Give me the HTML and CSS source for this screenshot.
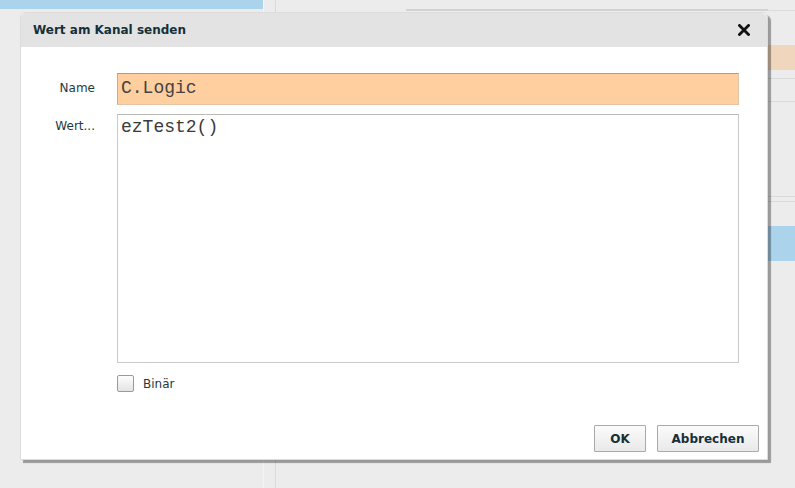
FILE: index.html
```html
<!DOCTYPE html>
<html lang="de">
<head>
<meta charset="utf-8">
<title>Wert am Kanal senden</title>
<link rel="stylesheet" href="styles.css">
</head>
<body>
<div class="app">
  <div class="col-left"><div class="blue-bar"></div></div>
  <div class="col-gap"></div>
  <div class="col-main"><div class="main-top"></div></div>
  <div class="col-right">
    <div class="r-top"></div>
    <div class="r-peach"></div>
    <div class="r-line r-l1"></div>
    <div class="r-line r-l2"></div>
    <div class="r-line r-l3"></div>
    <div class="r-line r-l4"></div>
    <div class="r-blue"></div>
  </div>
</div>

<div class="dialog">
  <div class="dlg-head">
    <span class="dlg-title">Wert am Kanal senden</span>
    <svg class="dlg-close" width="12" height="12" viewBox="0 0 12 12"><path d="M1.5 1.5 L10.5 10.5 M10.5 1.5 L1.5 10.5" stroke="#111" stroke-width="2.8" stroke-linecap="square"/></svg>
  </div>
  <div class="dlg-body">
    <div class="form">
      <label class="lbl lbl-name">Name</label>
      <div class="inp-name">C.Logic</div>
      <label class="lbl lbl-wert">Wert...</label>
      <div class="inp-wert">ezTest2()</div>
      <div></div>
      <div class="chk-row"><span class="chk"></span><span class="chk-lbl">Binär</span></div>
    </div>
    <div class="buttons">
      <button class="btn btn-ok">OK</button>
      <button class="btn btn-cancel">Abbrechen</button>
    </div>
  </div>
</div>
</body>
</html>
```

FILE: styles.css
```css
* { box-sizing: border-box; }
html, body { margin: 0; padding: 0; }
body {
  width: 795px;
  height: 488px;
  overflow: hidden;
  background: #ececec;
  font-family: "DejaVu Sans", Verdana, sans-serif;
  position: relative;
}
.app {
  display: flex;
  height: 488px;
}
.col-left { width: 263px; }
.blue-bar { height: 9px; background: #acd3ec; }
.col-gap {
  width: 13px;
  border-left: 1px solid #f4f4f4;
  border-right: 1px solid #d9d9d9;
}
.col-main { flex: 1; padding-left: 130px; }
.main-top { height: 11px; border-bottom: 2px solid #d2d2d2; }
.col-right {
  width: 27px;
  display: flex;
  flex-direction: column;
}
.r-top { height: 11px; border-bottom: 1px solid #dcdcdc; flex: none; }
.r-peach { height: 25px; margin-top: 34px; background: #f0d6bd; flex: none; }
.r-line { height: 1px; background: #dadada; flex: none; }
.r-l1 { margin-top: 8px; }
.r-l2 { margin-top: 22px; }
.r-l3 { margin-top: 94px; }
.r-l4 { margin-top: 4px; }
.r-blue { height: 35px; margin-top: 24px; background: #acd3ec; flex: none; }

.dialog {
  position: absolute;
  left: 20px;
  top: 12px;
  width: 748px;
  height: 448px;
  background: #fff;
  border: 1px solid #dcdcdc;
  border-radius: 5px 6px 0 0;
  box-shadow: 3px 3px 1px rgba(0,0,0,0.35);
  display: flex;
  flex-direction: column;
}
.dlg-head {
  height: 34px;
  flex: none;
  background: #e3e3e3;
  border-radius: 5px 6px 0 0;
  display: flex;
  align-items: center;
  justify-content: space-between;
  padding: 0 17px 0 12px;
}
.dlg-title {
  font-weight: bold;
  font-size: 12px;
  color: #15303a;
}
.dlg-close { display: block; }
.dlg-body {
  flex: 1;
  display: flex;
  flex-direction: column;
  padding: 26px 8px 7px 0;
}
.form {
  display: grid;
  grid-template-columns: 74px 622px;
  column-gap: 22px;
  row-gap: 9px;
  align-items: start;
}
.lbl {
  font-size: 12px;
  color: #1d3a40;
  text-align: right;
}
.lbl-name { line-height: 30px; }
.lbl-wert { padding-top: 5px; }
.inp-name {
  height: 32px;
  background: #ffcf9f;
  border: 1px solid #e2c4a6;
  border-top-color: #a99a8b;
  border-left-color: #c6ad94;
  font-family: "Liberation Mono", "Courier New", monospace;
  font-size: 18px;
  color: #444;
  padding: 3px 0 0 3px;
  line-height: 22px;
}
.inp-wert {
  height: 249px;
  background: #fff;
  border: 1px solid #c9c9c9;
  border-top-color: #b9b9b9;
  font-family: "Liberation Mono", "Courier New", monospace;
  font-size: 18px;
  color: #3a3a3a;
  padding: 1px 0 0 3px;
  line-height: 22px;
}
.chk-row {
  display: flex;
  align-items: center;
  gap: 9px;
  margin-top: 3px;
}
.chk {
  width: 17px;
  height: 17px;
  border: 1px solid #9a9a9a;
  border-radius: 2px;
  background: linear-gradient(#fdfdfd, #e4e4e4);
}
.chk-lbl { font-size: 12px; color: #1d3a40; }
.buttons {
  margin-top: auto;
  display: flex;
  justify-content: flex-end;
  gap: 11px;
}
.btn {
  height: 27px;
  font-family: "DejaVu Sans", Verdana, sans-serif;
  font-weight: bold;
  font-size: 12px;
  color: #15303a;
  background: linear-gradient(#fbfbfb, #e9e9e9);
  border: 1px solid #a9a9a9;
  border-radius: 1px;
  padding: 0;
}
.btn-ok { width: 52px; }
.btn-cancel { width: 102px; }
```
